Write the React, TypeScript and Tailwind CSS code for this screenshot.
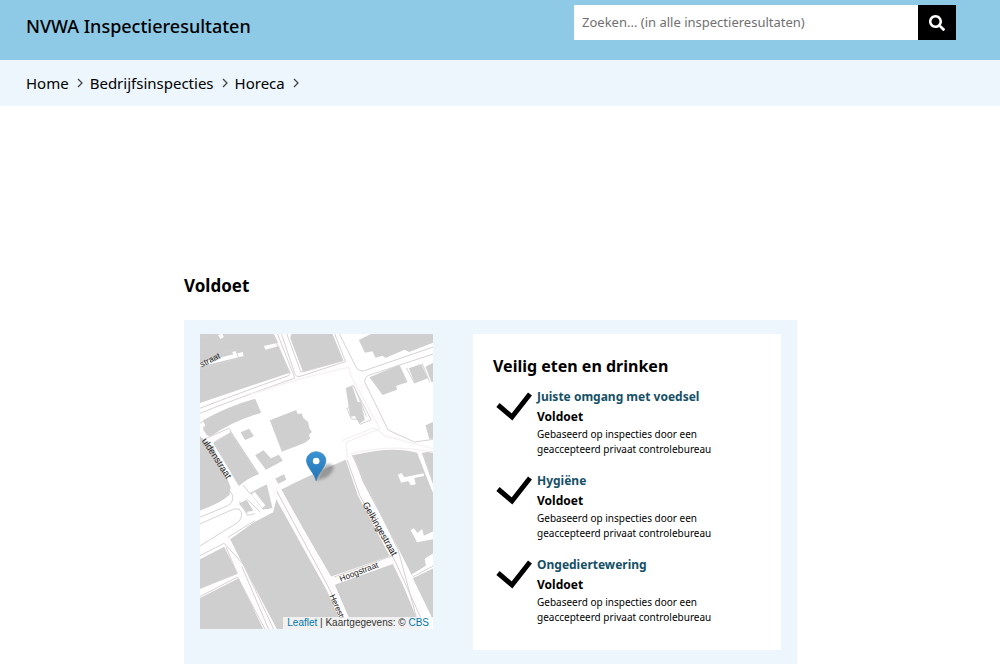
import { FaSearch } from 'react-icons/fa'

const crumbs = [
  { href: '#home', label: 'Home' },
  { href: '#bedrijfsinspecties', label: 'Bedrijfsinspecties' },
  { href: '#horeca', label: 'Horeca' },
]

const results = [
  { href: '#voedsel', label: 'Juiste omgang met voedsel' },
  { href: '#hygiene', label: 'Hygiëne' },
  { href: '#ongedierte', label: 'Ongediertewering' },
]

// building blocks on the street map
const buildings = [
  'M15 12H237L250 38L207 48L212 59L252 48L285 128L15 219Z',
  'M290 12H413L446 92L325 127L286 24Z',
  'M492 30L528 12H715V38L643 66L629 59L572 84L563 77L542 83L533 64L510 68Z',
  'M524 142L614 104L638 156L604 168L607 179L563 195Z',
  'M642 115L679 102L699 145L660 160Z',
  'M692 110L715 98V155L710 157Z',
  'M24 271Q100 228 181 206L199 248Q110 275 48 319L35 314L24 292L32 287Z',
  'M55 340L110 306L193 432Q155 447 133 468Z',
  'M137 307L163 296L177 319L151 330Z',
  'M225 271L304 240L309 253L320 250L326 265L340 276L343 293L351 306L342 314L346 326L329 339L261 365Z',
  'M181 376L206 361L228 385L252 374L264 392L213 419Z',
  'M453 174L472 167L489 217L498 215L510 269L494 281L480 258L466 260Z',
  'M692 286L715 276V326H703Z',
  'M15 318L55 350L107 470L104 495Q75 520 15 542Z',
  'M240 446L268 433L274 449L248 463Z',
  'M257 480Q350 432 458 387L495 500L587 680L410 742Z',
  'M474 376Q590 347 667 368L692 433L715 490V635L688 598L694 617L672 633L647 600L657 595L672 611L684 598L715 604V670L690 686L694 706L652 738L608 650L505 458Z',
  'M681 369L715 363V462Z',
  'M166 488L216 463L233 535L207 543Z',
  'M132 521L155 509L180 550L158 551Z',
  'M15 688L88 650L129 731L15 776Z',
  'M15 804L132 745L205 897H15Z',
  'M106 628L175 578L235 547L249 489L400 759L467 897H246L143 702Z',
  'M420 764L593 700L688 897H470Z',
  'M654 745L715 715V870Z',
]

// courtyards and alleys cut out of the blocks
const courtyards = [
  'M647 600L657 595L668 609L682 597L687 617L715 604V628L667 637Z',
  'M609 434L620 429L629 442L686 430L688 438L658 444L663 463L648 466L640 453L619 458Z',
  'M699 680L715 674V698L692 718L654 740L652 732L694 708L690 688Z',
]

const alleys = [
  'M15 104L145 72M118 64L124 80M75 12L82 24',
  'M158 551L234 541',
  'M175 489L207 530',
]

const outlines = [
  'M15 22L76 12M15 119L132 84L120 57L67 76',
  'M232 12L285 126Q287 135 278 138Q130 190 15 235',
  'M15 250Q130 204 300 144L248 12M260 12L301 134Q306 143 316 139L452 95L420 12M276 12L318 126L445 92',
  'M434 12L484 112Q492 126 509 122L715 51M715 72L521 136Q508 143 510 157L580 300L659 336L715 328',
  'M635 114L659 160M682 100L704 155',
  'M453 177L475 166L529 269L496 283L488 268L470 267L456 235L468 231M478 169L515 260',
  'M105 305L188 432M22 330L102 295Q113 304 104 310L58 336L131 465',
  'M86 456L112 493Q119 515 99 527L15 562',
  'M15 582L117 537Q143 534 140 557Q138 575 115 586L15 648',
  'M134 514L158 556L180 551M155 506L197 547M145 465L167 493',
  'M15 677L88 640L146 704L236 897M15 800L128 741L210 897',
  'M15 776L127 730L93 650M99 622L180 572M141 709L221 897',
  'M246 484L400 770L445 862M418 741L590 678',
  'M457 390L495 497L604 700L693 897M472 375L610 660L674 897',
  'M655 740L715 708M683 368L715 461',
  'M15 280L48 261L26 300L42 319',
]

const faintOutlines = [
  'M165 194Q310 143 461 112L469 139L555 296L453 337L458 384',
  'M442 332L535 294Q553 300 567 317L715 356',
  'M466 372Q590 339 715 367',
]

function StreetMap() {
  return (
    <svg
      viewBox="15 12 700 885"
      preserveAspectRatio="xMidYMid slice"
      className="block h-full w-full bg-white"
      role="img"
      aria-label="Kaart"
    >
      <defs>
        <linearGradient id="pin" x1="0" y1="0" x2="0" y2="1">
          <stop offset="0" stopColor="#3a93d3" />
          <stop offset="1" stopColor="#2474b5" />
        </linearGradient>
        <filter id="shade" x="-30%" y="-30%" width="160%" height="160%">
          <feGaussianBlur stdDeviation="5" />
        </filter>
      </defs>
      <g fill="#cfcfcf">
        {buildings.map(d => <path key={d} d={d} />)}
      </g>
      <g fill="#fff">
        {courtyards.map(d => <path key={d} d={d} />)}
      </g>
      <g fill="none" stroke="#fff" strokeWidth="12">
        {alleys.map(d => <path key={d} d={d} />)}
      </g>
      <g fill="none" stroke="#fefcfc" strokeWidth="28">
        <path d="M228 450L410 778L462 897" />
        <path d="M405 755L590 690" strokeWidth="26" />
        <path d="M462 380L500 492L615 710L692 897" strokeWidth="24" />
        <path d="M94 628L142 725L224 897" strokeWidth="20" />
      </g>
      <g fill="none" stroke="#d6d2d4" strokeWidth="3">
        {outlines.map(d => <path key={d} d={d} />)}
      </g>
      <g fill="none" stroke="#f5f1f2" strokeWidth="4">
        {faintOutlines.map(d => <path key={d} d={d} />)}
      </g>
      <g fill="#222" fontSize="28" className="font-['Liberation_Sans',sans-serif]">
        <text transform="translate(20 112) rotate(-26)" fontSize="26">straat</text>
        <text transform="translate(20 332) rotate(57)">uldenstraat</text>
        <text transform="translate(502 523) rotate(60)">Gelkingestraat</text>
        <text transform="translate(438 755) rotate(-21)" fontSize="25">Hoogstraat</text>
        <text transform="translate(404 798) rotate(66)" fontSize="24">Herestr</text>
      </g>
      <path d="M364 452L385 408Q403 397 416 407Q420 424 393 443Z" fill="#555" opacity=".45" filter="url(#shade)" />
      <path
        d="M364 452C358 428 335 411 335 391A29 26 0 0 1 393 391C393 411 370 428 364 452Z"
        fill="url(#pin)"
        stroke="#2d79b3"
        strokeWidth="2"
      />
      <circle cx="364" cy="393" r="10" fill="#fff" />
    </svg>
  )
}

function CheckMark() {
  return (
    <svg viewBox="0 0 36 30" className="mt-1 h-[30px] w-9 shrink-0" fill="none" stroke="#000" strokeWidth="5" aria-hidden="true">
      <path d="M2 14L16 26L34 3" />
    </svg>
  )
}

export default function App() {
  return (
    <div className="min-h-screen bg-white font-['Noto_Sans',sans-serif] text-black">
      <header className="flex h-[60px] items-start justify-between bg-[#8ec9e6] pr-11 pl-[26px]">
        <a href="#home" className="pt-3 text-lg leading-7 font-medium">NVWA Inspectieresultaten</a>
        <form role="search" className="mt-[5px] flex h-[35px] w-[382px]">
          <input
            type="search"
            aria-label="Zoeken"
            placeholder="Zoeken... (in alle inspectieresultaten)"
            className="min-w-0 flex-1 bg-white px-2 text-[13px] placeholder:text-[#707070] focus:outline-none"
          />
          <button type="button" aria-label="Zoek" className="flex w-[38px] items-center justify-center bg-black text-white">
            <FaSearch className="h-4 w-4" />
          </button>
        </form>
      </header>

      <nav aria-label="Kruimelpad" className="bg-[#edf6fc] pl-[26px]">
        <ol className="flex h-[46px] items-center text-[15px]">
          {crumbs.map(({ href, label }) => (
            <li key={href} className="flex items-center">
              <a href={href}>{label}</a>
              <svg viewBox="0 0 6 10" className="mr-[7px] ml-2 h-[10px] w-[6px]" fill="none" stroke="#444" strokeWidth="1.3" aria-hidden="true">
                <path d="M1 1L5 5L1 9" />
              </svg>
            </li>
          ))}
        </ol>
      </nav>

      <main className="pt-[168px] pr-[19px]">
        <div className="mx-auto max-w-[613px]">
          <h1 className="text-[17px] leading-6 font-bold">Voldoet</h1>
          <div className="mt-[22px] flex items-start justify-between bg-[#edf6fc] px-4 pt-[14px] pb-[14px]">
            <div className="relative h-[295px] w-[233px]">
              <StreetMap />
              <div className="absolute right-0 bottom-0 bg-white/70 px-1 font-['Liberation_Sans',sans-serif] text-[10px] leading-3 whitespace-nowrap text-[#333]">
                <a href="#leaflet" className="text-[#0078a8]">Leaflet</a> | Kaartgegevens: © <a href="#cbs" className="text-[#0078a8]">CBS</a>
              </div>
            </div>

            <section className="w-[308px] bg-white px-5 pt-5 pb-[25px]">
              <h2 className="text-base leading-6 font-bold">Veilig eten en drinken</h2>
              <ul className="mt-[9px] space-y-[14px]">
                {results.map(({ href, label }) => (
                  <li key={href} className="flex gap-[5px] pl-[3px]">
                    <CheckMark />
                    <div>
                      <a href={href} className="block text-xs leading-5 font-bold text-[#154f66]">{label}</a>
                      <p className="text-xs leading-5 font-bold">Voldoet</p>
                      <p className="text-[10px] leading-[15px]">
                        Gebaseerd op inspecties door een
                        <br />
                        geaccepteerd privaat controlebureau
                      </p>
                    </div>
                  </li>
                ))}
              </ul>
            </section>
          </div>
        </div>
      </main>
    </div>
  )
}
